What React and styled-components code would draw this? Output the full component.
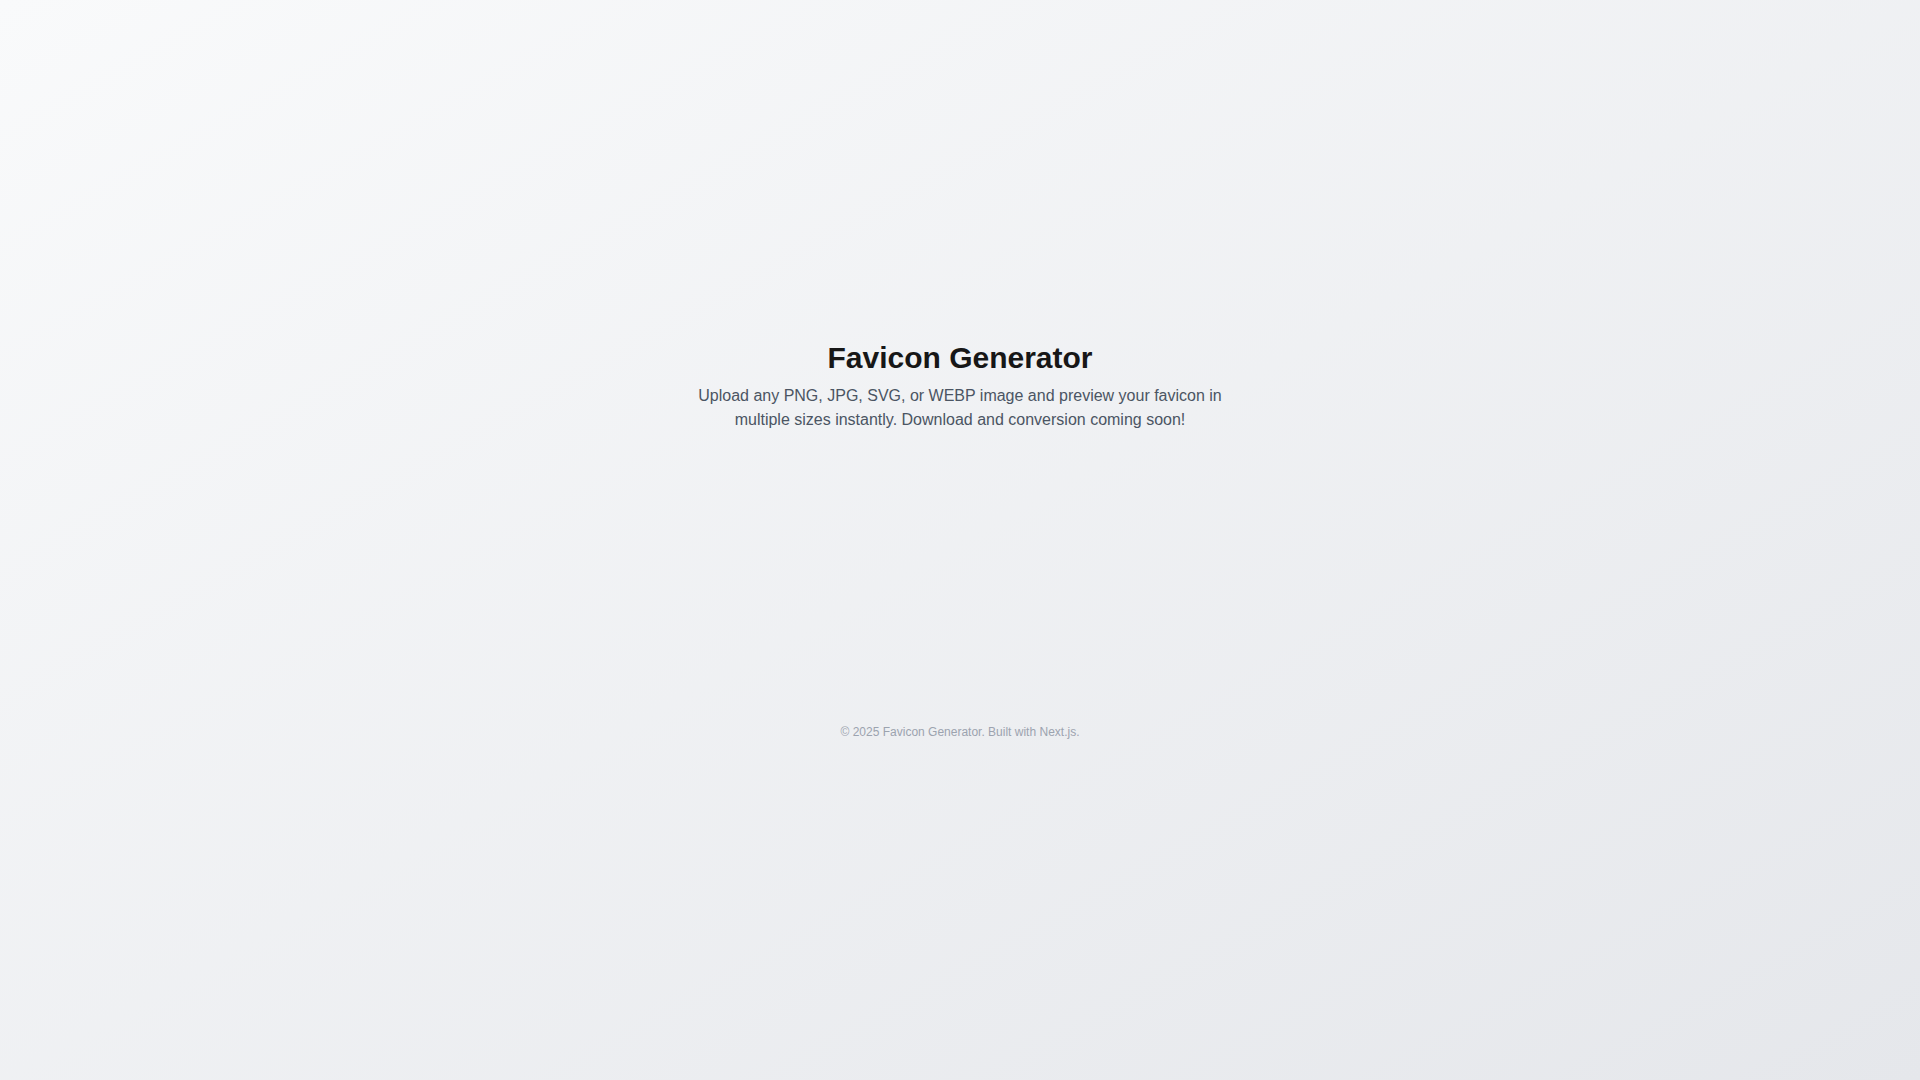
import React from "react";
import styled, { createGlobalStyle } from "styled-components";

const Global = createGlobalStyle`
  html, body { margin: 0; padding: 0; }
  body {
    font-family: "Liberation Sans", Arial, Helvetica, sans-serif;
    -webkit-font-smoothing: antialiased;
  }
  * { box-sizing: border-box; }
`;

const Page = styled.main`
  min-height: 100vh;
  width: 100%;
  display: flex;
  flex-direction: column;
  align-items: center;
  justify-content: center;
  background: linear-gradient(to bottom right, #f9fafb, #e5e7eb);
`;

const Header = styled.header`
  display: flex;
  flex-direction: column;
  align-items: center;
  text-align: center;
`;

const Title = styled.h1`
  margin: 0 0 8px;
  font-size: 30px;
  line-height: 36px;
  font-weight: 700;
  color: #171717;
`;

const Subtitle = styled.p`
  margin: 0;
  max-width: 560px;
  font-size: 16px;
  line-height: 24px;
  color: #4b5563;
`;

const DropZone = styled.section`
  margin-top: 35px;
  width: 380px;
  height: 185px;
  border-radius: 16px;
  background: rgba(255, 255, 255, 0.04);
  box-shadow: 0 0 24px rgba(255, 255, 255, 0.08);
`;

const Footer = styled.footer`
  margin-top: 72px;
  font-size: 12px;
  line-height: 16px;
  color: #9ca3af;
  text-align: center;
`;

export default function App() {
  return (
    <>
      <Global />
      <Page>
        <Header>
          <Title>Favicon Generator</Title>
          <Subtitle>
            Upload any PNG, JPG, SVG, or WEBP image and preview your favicon in
            multiple sizes instantly. Download and conversion coming soon!
          </Subtitle>
        </Header>
        <DropZone aria-label="Upload area" />
        <Footer>© 2025 Favicon Generator. Built with Next.js.</Footer>
      </Page>
    </>
  );
}
